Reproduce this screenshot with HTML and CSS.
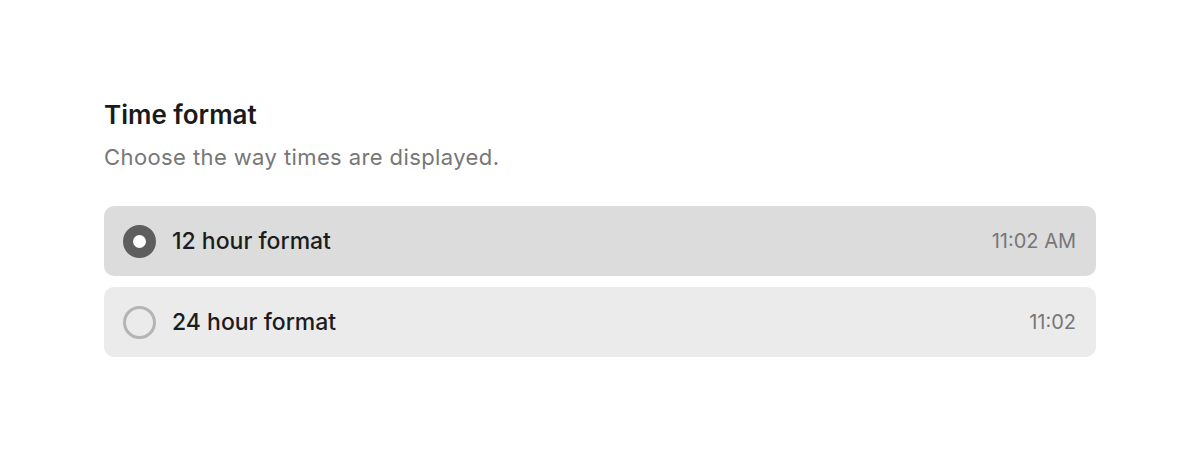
FILE: index.html
```html
<!DOCTYPE html>
<html>
<head>
<meta charset="utf-8">
<link rel="stylesheet" href="styles.css">
</head>
<body>
<section class="setting">
  <h2 class="title">Time format</h2>
  <p class="desc">Choose the way times are displayed.</p>
  <div class="options">
    <label class="option selected">
      <span class="radio"></span>
      <span class="label">12 hour format</span>
      <span class="time">11:02 AM</span>
    </label>
    <label class="option">
      <span class="radio"></span>
      <span class="label">24 hour format</span>
      <span class="time">11:02</span>
    </label>
  </div>
</section>
</body>
</html>
```
FILE: styles.css
```css
html, body {
  margin: 0;
  padding: 0;
  background: #ffffff;
  font-family: Inter, "Noto Sans", sans-serif;
}
.setting {
  width: 992px;
  margin: 0 auto;
  padding-top: 98px;
}
.title {
  margin: 0;
  font-size: 26px;
  line-height: 34px;
  font-weight: 600;
  color: #1a1a1a;
}
.desc {
  margin: 10px 0 0;
  font-size: 22px;
  line-height: 30px;
  letter-spacing: 0.4px;
  color: #777777;
}
.options {
  margin-top: 34px;
  display: flex;
  flex-direction: column;
  gap: 11px;
}
.option {
  display: flex;
  align-items: center;
  height: 70px;
  padding: 0 20px 0 19px;
  border-radius: 10px;
  background: #ebebeb;
  box-sizing: border-box;
}
.option.selected {
  background: #dcdcdc;
}
.radio {
  width: 33px;
  height: 33px;
  border-radius: 50%;
  box-sizing: border-box;
  border: 3px solid #b4b4b4;
  flex: none;
}
.option.selected .radio {
  border: 10.5px solid #5e5e5e;
  background: #ffffff;
}
.label {
  margin-left: 16px;
  font-size: 23px;
  font-weight: 500;
  color: #1c1c1c;
  flex: 1;
}
.time {
  font-size: 20px;
  color: #777777;
}
```
